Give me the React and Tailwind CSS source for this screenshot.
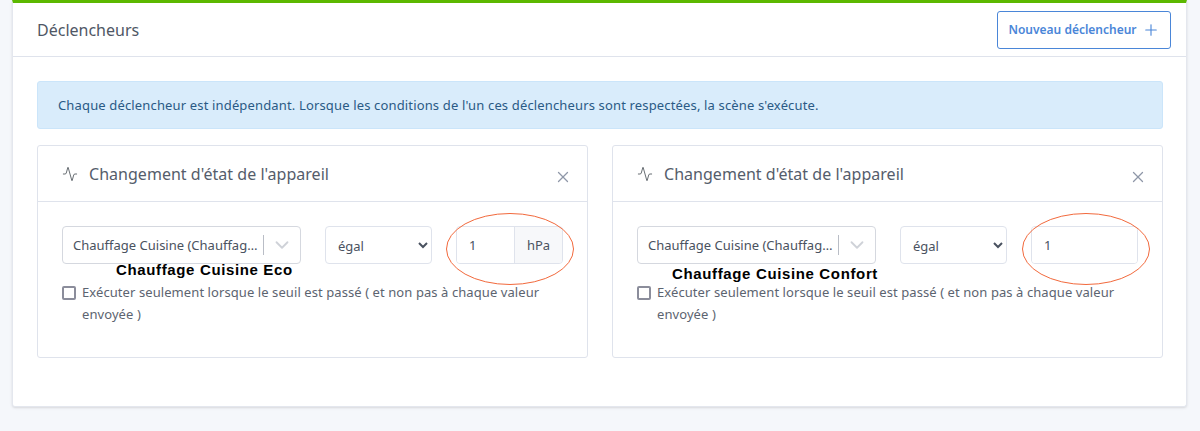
import React from "react";
import { Activity, ChevronDown, Plus, X } from "lucide-react";

const font = { fontFamily: '"Noto Sans", "Liberation Sans", sans-serif' };

function TriggerCard({ unit, label, labelClass, ellipseClass }) {
  return (
    <div className="relative rounded-[3px] border border-[#dfe3ec] bg-white h-[213px]">
      <div className="flex items-center justify-between h-[56px] border-b border-[#dfe3ec] pl-6 pr-[15px]">
        <div className="flex items-center gap-[11px]">
          <Activity size={16} strokeWidth={1.25} className="text-[#495057]" />
          <span className="text-[16px] tracking-[0.03px] text-[#555d6b]">Changement d'état de l'appareil</span>
        </div>
        <X size={18} strokeWidth={1.75} className="mt-[6px] text-[#8f97a8]" />
      </div>
      <div className="px-6 pt-6">
        <div className="flex gap-6">
          <div className="flex items-center w-[239px] h-[38px] rounded-[4px] border border-[#d5d8df] bg-white pl-[10px]">
            <span className="flex-1 min-w-0 whitespace-nowrap pt-[2px] text-[13px] text-[#4a5260]">Chauffage Cuisine (Chauffag…</span>
            <span className="w-px h-[20px] bg-[#b9bdc6] ml-[1px]" />
            <span className="flex w-[36px] justify-center">
              <ChevronDown size={22} strokeWidth={2} className="text-[#cfd2d8]" />
            </span>
          </div>
          <select className="w-[107px] h-[38px] rounded-[4px] border border-[#dfe3ec] bg-white pl-2 pt-[2px] text-[13px] text-[#4a5260]">
            <option>égal</option>
          </select>
          <div className="flex w-[107px] h-[38px] rounded-[4px] border border-[#dfe3ec] overflow-hidden">
            <input readOnly value="1" className="flex-1 min-w-0 pl-3 pt-[2px] text-[13px] text-[#4a5260] bg-white outline-none" />
            {unit && (
              <span className="flex items-center justify-center w-[48px] pt-[2px] border-l border-[#dfe3ec] bg-[#f7f8fa] text-[13px] text-[#4a5260]">{unit}</span>
            )}
          </div>
        </div>
        <div className="flex items-start gap-[6px] mt-[21px]">
          <input type="checkbox" readOnly className="appearance-none shrink-0 w-[14px] h-[14px] mt-[1px] rounded-[2px] border-2 border-[#8b8d9b] bg-white" />
          <p className="text-[13px] tracking-[0.08px] leading-[22px] -mt-[4px] text-[#5c6470]">
            Exécuter seulement lorsque le seuil est passé ( et non pas à chaque valeur envoyée )
          </p>
        </div>
      </div>
      <span className={`absolute font-bold text-[15px] tracking-[0.64px] text-black whitespace-nowrap ${labelClass}`} style={{ fontFamily: '"Liberation Sans", sans-serif' }}>{label}</span>
      <svg className={`absolute pointer-events-none ${ellipseClass}`} width="130" height="74" viewBox="0 0 130 74" fill="none">
        <ellipse cx="65" cy="37" rx="63.5" ry="35.5" stroke="#f2693c" strokeWidth="1" />
      </svg>
    </div>
  );
}

export default function App() {
  return (
    <div className="min-h-[431px] bg-[#f5f7fb] pl-3 pr-[13px]" style={font}>
      <div className="h-[407px] rounded-b-[3px] border-x border-b border-[#e4e7ee] border-t-[3px] border-t-[#5cb800] bg-white shadow-sm">
        <div className="flex items-center justify-between h-[54px] border-b border-[#dfe3ec] pl-6 pr-[15px]">
          <h2 className="text-[16px] text-[#4f5765]">Déclencheurs</h2>
          <button className="flex items-center justify-center gap-[5px] w-[174px] h-[38px] rounded-[3px] border border-[#4a86d8] bg-white text-[12px] font-semibold text-[#4a86d8]">
            Nouveau déclencheur
            <Plus size={18} strokeWidth={1.5} />
          </button>
        </div>
        <div className="px-6 pt-6">
          <div className="flex items-center w-[1126px] h-[48px] rounded-[3px] border border-[#cbe5fa] bg-[#d9ecfb] pl-5 pt-[2px] text-[13px] tracking-[0.15px] text-[#2a5a85]">
            Chaque déclencheur est indépendant. Lorsque les conditions de l'un ces déclencheurs sont respectées, la scène s'exécute.
          </div>
          <div className="flex gap-6 mt-4 w-[1126px]">
            <div className="flex-1"><TriggerCard unit="hPa" label="Chauffage Cuisine Eco" labelClass="left-[78px] top-[113px]" ellipseClass="left-[407px] top-[66px]" /></div>
            <div className="flex-1"><TriggerCard label="Chauffage Cuisine Confort" labelClass="left-[59px] top-[117px]" ellipseClass="left-[408px] top-[66px]" /></div>
          </div>
        </div>
      </div>
    </div>
  );
}
